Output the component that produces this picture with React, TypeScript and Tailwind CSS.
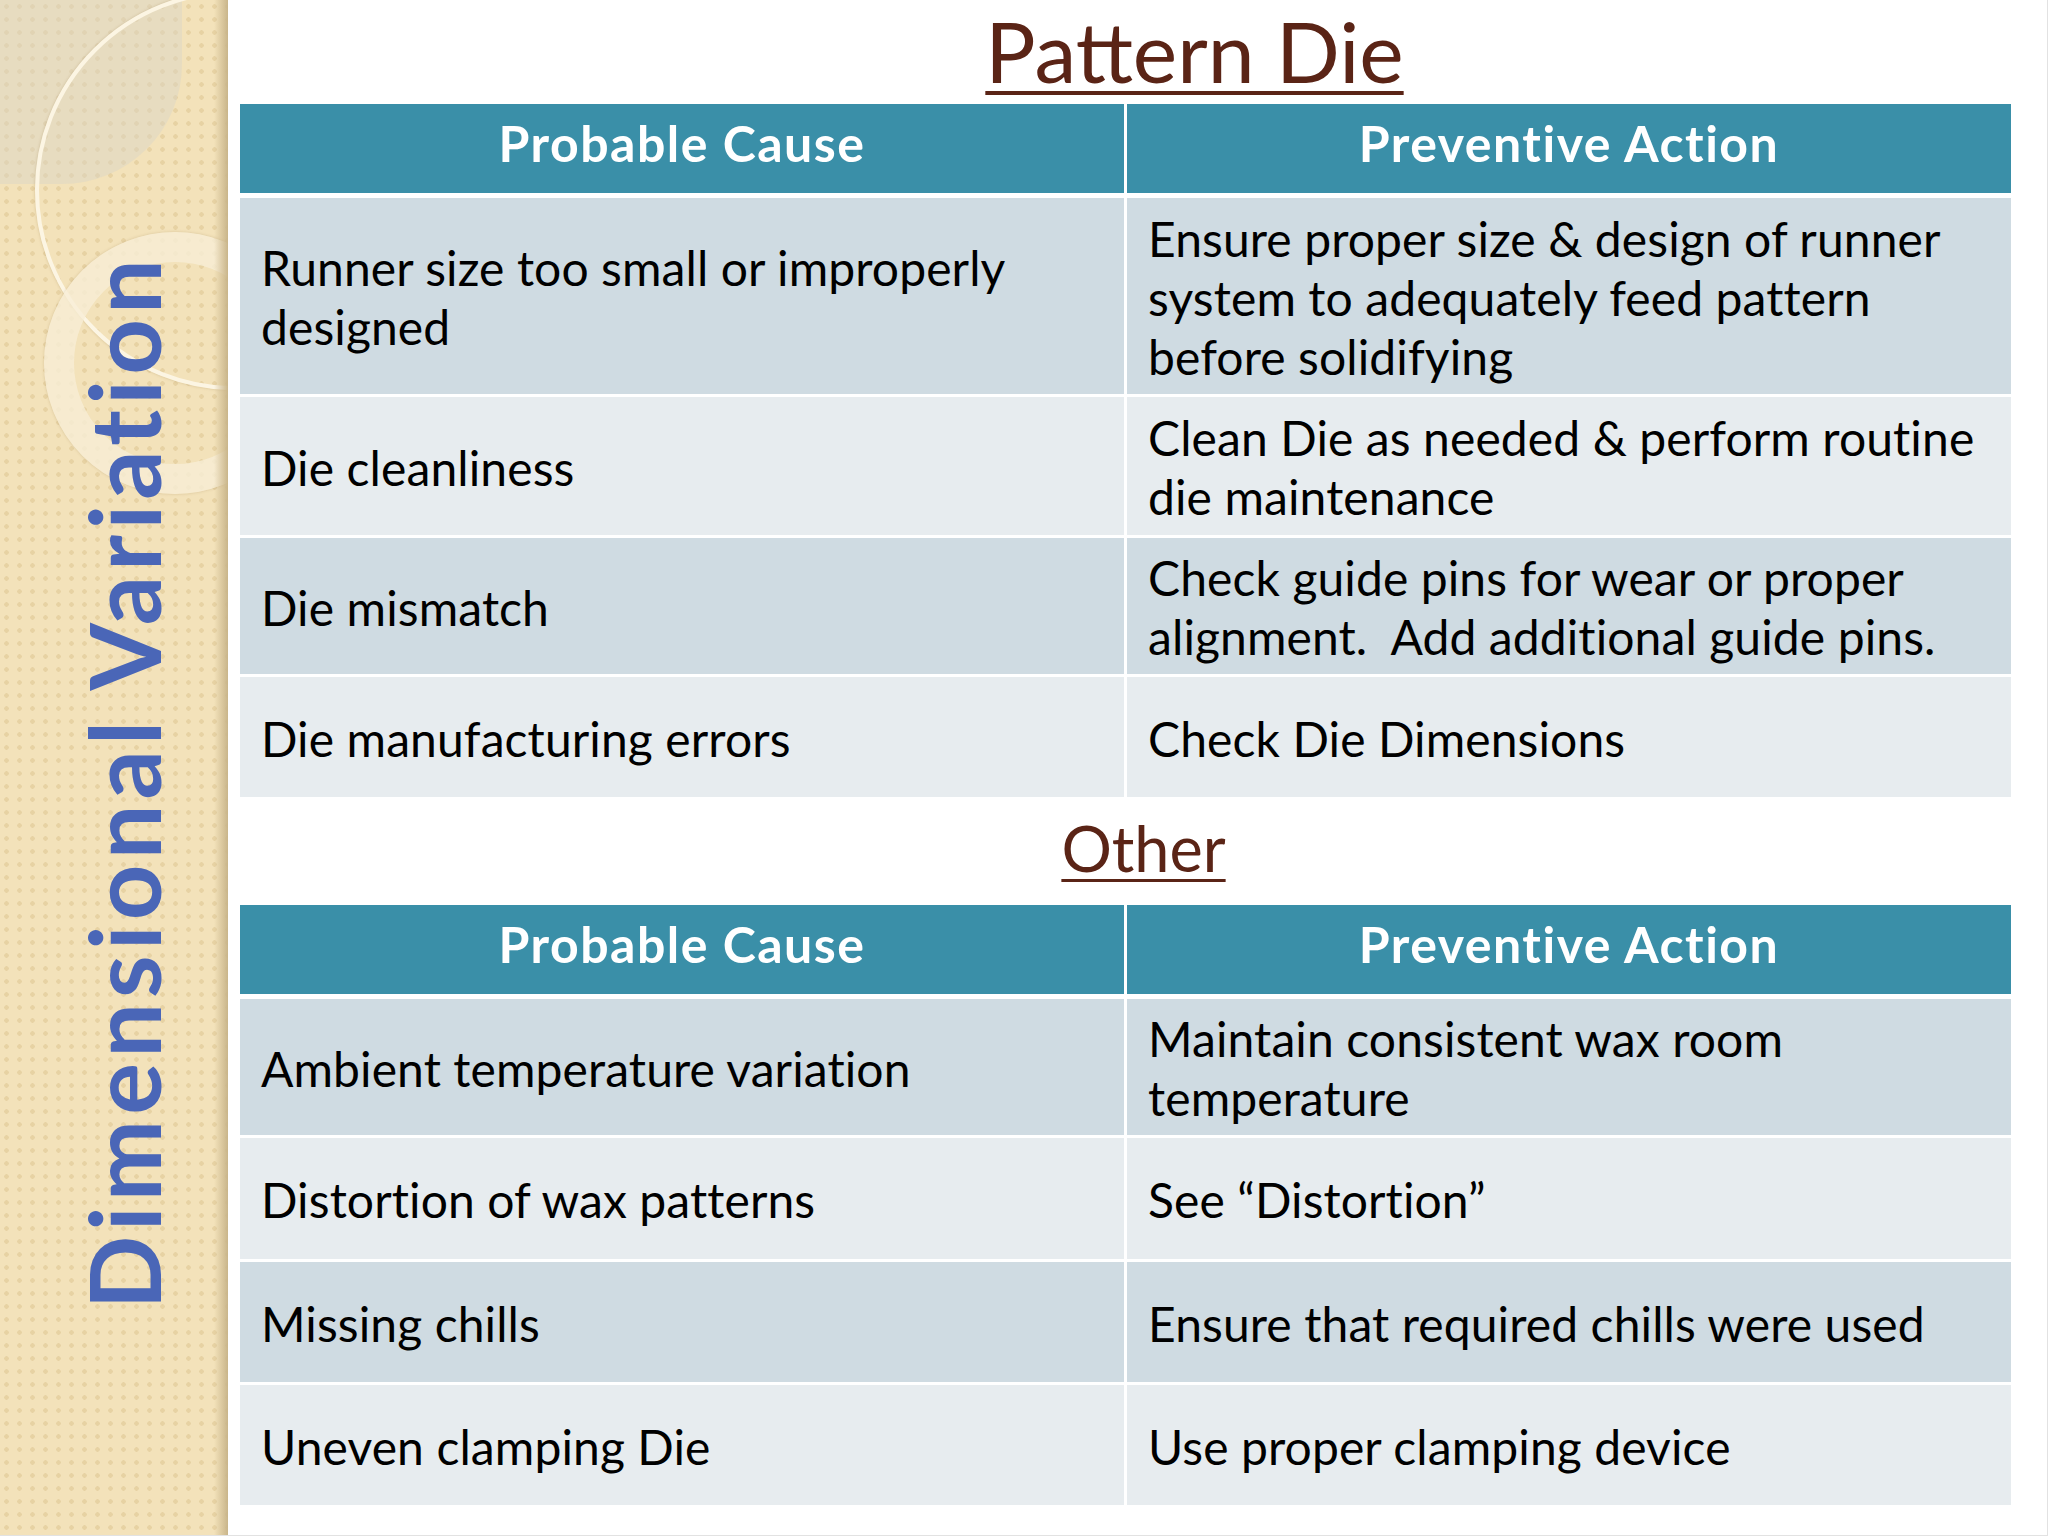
const patternRows = [
  {
    cause: "Runner size too small or improperly designed",
    action: "Ensure proper size & design of runner system to adequately feed pattern before solidifying",
    h: "h-[196px]",
  },
  {
    cause: "Die cleanliness",
    action: "Clean Die as needed & perform routine die maintenance",
    h: "h-[138px]",
  },
  {
    cause: "Die mismatch",
    action: "Check guide pins for wear or proper alignment.\u00a0 Add additional guide pins.",
    h: "h-[136px]",
  },
  {
    cause: "Die manufacturing errors",
    action: "Check Die Dimensions",
    h: "h-[120px]",
  },
];

const otherRows = [
  {
    cause: "Ambient temperature variation",
    action: "Maintain consistent wax room temperature",
    h: "h-[136px]",
  },
  {
    cause: "Distortion of wax patterns",
    action: "See \u201cDistortion\u201d",
    h: "h-[121px]",
  },
  {
    cause: "Missing chills",
    action: "Ensure that required chills were used",
    h: "h-[120px]",
  },
  {
    cause: "Uneven clamping Die",
    action: "Use proper clamping device",
    h: "h-[120px]",
  },
];

type Row = { cause: string; action: string; h: string };

const CauseTable = ({ rows }: { rows: Row[] }) => {
  return (
    <div className="flex flex-col">
      {/* header */}
      <div className="grid grid-cols-2 gap-x-[3px] h-[89px] mb-[5px]">
        {["Probable Cause", "Preventive Action"].map((label) => (
          <div
            key={label}
            className="bg-[#3a8fa8] flex items-center justify-center pb-[10px] text-white font-bold text-[50px] tracking-[1.5px]"
          >
            {label}
          </div>
        ))}
      </div>

      {/* body */}
      <div className="flex flex-col gap-y-[3px]">
        {rows.map((row, i) => (
          <div key={i} className={`grid grid-cols-2 gap-x-[3px] ${row.h}`}>
            {[row.cause, row.action].map((text, j) => (
              <div
                key={j}
                className={`flex items-center pl-[21px] pr-[18px] pt-[2px] text-black text-[48px] leading-[59px] tracking-[0.1px] ${
                  i % 2 === 0 ? "bg-[#cfdbe2]" : "bg-[#e7ecef]"
                }`}
              >
                <span>{text}</span>
              </div>
            ))}
          </div>
        ))}
      </div>
    </div>
  );
};

const Sidebar = () => {
  return (
    <div className="relative w-[228px] h-[1536px] shrink-0 overflow-hidden bg-[#f3e2ba] bg-[radial-gradient(circle,#e7d2a3_2px,transparent_2.5px)] bg-size-[13px_13px]">
      {/* greyish panel top-left */}
      <div className="absolute left-0 top-0 w-[182px] h-[184px] rounded-br-[120px] bg-[#d9d4c8]/45" />

      {/* big thin circle */}
      <div className="absolute left-[35px] top-[-10px] w-[400px] h-[400px] rounded-full border-[4px] border-[#fcf5e3] shadow-[0_0_3px_rgba(150,120,70,0.35)]" />

      {/* thick ring */}
      <div className="absolute left-[44px] top-[232px] w-[262px] h-[262px] rounded-full border-[30px] border-[#f8eed6]/80 shadow-[0_0_3px_rgba(150,120,70,0.3)]" />

      {/* vertical title */}
      <div className="absolute inset-0 flex items-center pt-[28px] pl-[75px]">
        <div className="[writing-mode:vertical-rl] rotate-180 text-[#4a66b7] font-bold text-[97px] leading-[97px] tracking-[5.2px] whitespace-nowrap">
          Dimensional Variation
        </div>
      </div>

      {/* shadow along the right edge */}
      <div className="absolute inset-y-0 right-0 w-[14px] bg-gradient-to-r from-transparent to-[#c9b58a]" />
    </div>
  );
};

export default function App() {
  return (
    <div className="w-[2048px] h-[1536px] flex bg-white overflow-hidden font-['Lato','Noto_Sans',sans-serif] border-r border-b border-[#e2e2e2]">
      <Sidebar />

      <div className="flex-1 flex flex-col pl-[12px] pr-[36px]">
        {/* Pattern Die title */}
        <div className="h-[104px] flex justify-center pl-[138px]">
          <h1 className="text-[84px] leading-[101px] text-[#5a2416] underline decoration-[4px] underline-offset-[8px]">
            Pattern Die
          </h1>
        </div>

        <CauseTable rows={patternRows} />

        {/* Other title */}
        <div className="h-[108px] flex justify-center pl-[36px] pt-[19px]">
          <h2 className="text-[63px] leading-[63px] text-[#5a2416] underline decoration-[3px] underline-offset-[7px]">
            Other
          </h2>
        </div>

        <CauseTable rows={otherRows} />
      </div>
    </div>
  );
}
